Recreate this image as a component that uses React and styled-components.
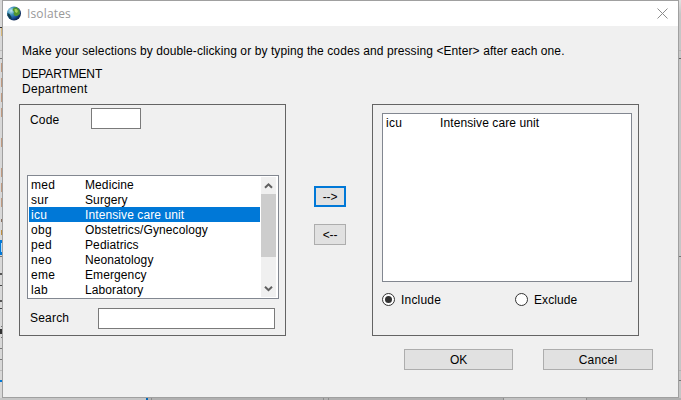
import React from 'react';
import styled, { createGlobalStyle } from 'styled-components';

const GlobalStyle = createGlobalStyle`
  * { box-sizing: border-box; }
  body { margin: 0; overflow: hidden; font: 12px/15px "Liberation Sans", Arial, sans-serif; color: #000; }
`;

const mark = (color, y, height, x = 0, width = 2) =>
  `linear-gradient(${color}, ${color}) ${x}px ${y}px / ${width}px ${height}px no-repeat`;

const leftMarks = [
  mark('#b5d9f5', 243, 9, 1, 1),
  mark('#0078d7', 240, 15),
  mark('#0078d7', 380, 2),
  mark('#333', 27, 1),
  mark('#d8b878', 28, 8, 1, 1),
  mark('#bbb', 50, 1),
  mark('#777', 58, 1),
  ...[63, 78, 93, 108, 138, 168, 183, 198].map(y => mark('#c09a80', y, 9, 1, 1)),
  mark('#8a7060', 219, 3, 1, 1),
  mark('#c09040', 230, 5, 1, 1),
  mark('#777', 256, 1),
  mark('#555', 273, 2),
  mark('#444', 285, 1),
  mark('#555', 300, 2),
  mark('#444', 308, 1),
  mark('#777', 326, 1, 1, 1),
  mark('#333', 329, 5),
  mark('#777', 337, 1, 1, 1),
  mark('#777', 348, 1),
  mark('#777', 359, 1),
  mark('#bbb', 370, 1),
].join(', ');

const rightMarks = [
  mark('#b4b4b4', 50, 1),
  mark('#666', 58, 1),
  mark('#777', 256, 1),
  mark('#b0b0b0', 370, 1),
  mark('#777', 380, 1),
].join(', ');

const Desktop = styled.div`
  display: grid;
  grid-template-columns: 2px 677px 2px;
  grid-template-rows: 398px 2px;
  width: 681px;
  height: 400px;
`;

const LeftSliver = styled.div`
  background: ${leftMarks}, #d8d8d8;
`;

const RightSliver = styled.div`
  background: ${rightMarks}, linear-gradient(#e2e2e2, #c6c6c6 14px, #c6c6c6);
`;

const BottomSliver = styled.div`
  grid-column: 1 / -1;
  background:
    ${mark('#0067b8', 0, 2, 146)},
    ${mark('#8c8c8c', 0, 2, 151, 1)},
    ${mark('#8c8c8c', 0, 2, 323, 1)},
    ${mark('#8c8c8c', 0, 2, 328, 1)},
    ${mark('#8c8c8c', 0, 2, 503, 1)},
    ${mark('#8c8c8c', 0, 2, 586, 1)},
    ${mark('#c2c2c2', 0, 2, 504, 82)},
    ${mark('#c6c6c6', 0, 2, 0, 146)},
    #b0b0b0;
`;

const Dialog = styled.div`
  display: flex;
  flex-direction: column;
  border: 1px solid #a0a0a0;
  background: #f0f0f0;
`;

const TitleBar = styled.div`
  display: flex;
  align-items: center;
  height: 25px;
  padding: 0 10px 1px 4px;
  background: #fff;
`;

const Title = styled.span`
  flex: 1;
  margin: 1px 0 0 6px;
  color: #999;
  font: 12px/16px "Open Sans", "Noto Sans", sans-serif;
  letter-spacing: 0.15px;
`;

const Text = styled.span`
  white-space: pre;
  letter-spacing: ${p => p.$spacing ?? 0.1}px;
`;

const Intro = styled.div`
  display: flex;
  flex-direction: column;
  height: 78px;
  padding: 18px 0 0 19px;
`;

const Department = styled.div`
  display: flex;
  flex-direction: column;
  margin-top: 8px;
`;

const Main = styled.div`
  display: flex;
  padding-left: 16px;
`;

const Panel = styled.div`
  width: 267px;
  height: 232px;
  border: 1px solid #646464;
  padding: ${p => p.$padding};
`;

const Field = styled.label`
  display: flex;
  height: 21px;
  padding-left: 3px;
`;

const FieldName = styled.span`
  width: ${p => p.$width}px;
  line-height: ${p => p.$line}px;
  letter-spacing: 0.2px;
`;

const Input = styled.input`
  width: ${p => p.$width}px;
  height: 21px;
  border: 1px solid #7a7a7a;
  background: #fff;
  padding: 0 3px;
  outline: none;
`;

const ListBox = styled.div`
  display: flex;
  width: ${p => p.$width}px;
  height: ${p => p.$height}px;
  margin: ${p => p.$margin || 0};
  padding: 1px;
  border: 1px solid #828790;
  background: #fff;
`;

const Rows = styled.div`
  flex: 1;
`;

const Row = styled.div`
  display: grid;
  grid-template-columns: 54px 1fr;
  height: 15px;
  padding-left: 2px;
  line-height: 17px;
  color: ${p => (p.$selected ? '#fff' : '#000')};
  background: ${p => (p.$selected ? '#0078d7' : 'transparent')};
`;

const ScrollBar = styled.div`
  display: flex;
  flex-direction: column;
  width: 15px;
  margin: 0 1px;
  background: #f0f0f0;
`;

const ScrollThumb = styled.div`
  height: 63px;
  margin-bottom: auto;
  background: #cdcdcd;
`;

const Transfer = styled.div`
  display: flex;
  flex-direction: column;
  align-items: center;
  gap: 17px;
  width: 86px;
  padding: 82px 0 0 2px;
`;

const Button = styled.button`
  width: ${p => p.$width}px;
  height: 21px;
  padding: ${p => (p.$focused ? 1 : 2)}px 0 0;
  border: ${p => (p.$focused ? '2px solid #0078d7' : '1px solid #adadad')};
  background: #e1e1e1;
  color: #000;
  font: inherit;
  line-height: ${p => (p.$focused ? 16 : 17)}px;
  letter-spacing: ${p => p.$spacing ?? 0.1}px;
`;

const Choices = styled.div`
  display: grid;
  grid-template-columns: 133px 1fr;
  margin-top: 10px;
`;

const Choice = styled.label`
  display: flex;
  align-items: center;
  gap: 6px;
  height: 15px;
  line-height: 15px;
`;

const ChoiceText = styled(Text)`
  padding-top: 2px;
`;

const Actions = styled.div`
  display: flex;
  justify-content: flex-end;
  gap: 30px;
  padding: 13px 25px 0 0;
`;

const GlobeIcon = () => (
  <svg width="14" height="15" viewBox="0 0 14 15">
    <defs>
      <radialGradient id="sea" cx=".3" cy=".3" r=".8">
        <stop offset="0" stopColor="#c4ecf4" />
        <stop offset=".35" stopColor="#3f93bc" />
        <stop offset=".7" stopColor="#164a94" />
        <stop offset="1" stopColor="#071838" />
      </radialGradient>
    </defs>
    <circle cx="7" cy="7.5" r="7" fill="url(#sea)" />
    <path d="M6.500 2l3-1 3 3 .5 4-3 2-2 0-1.500-2 .500-2-1.500-2z" fill="#4f9430" />
    <path d="M.5 7l2 1 2 3 0 2.500-2-1-2-3z" fill="#123f4c" />
    <path d="M7.500 3l2 0 1.500 2-1 2-2-1z" fill="#a4d058" />
  </svg>
);

const CloseIcon = () => (
  <svg width="11" height="11" viewBox="0 0 11 11">
    <path d="M.5.5l10 10M10.500.5l-10 10" stroke="#8c8c8c" fill="none" />
  </svg>
);

const Chevron = ({ down }) => (
  <svg width="15" height="17" viewBox="0 0 15 17">
    <path
      d={down ? 'M4 6.700l3.500 3.500 3.500-3.500' : 'M4 10.800l3.500-3.500 3.500 3.500'}
      stroke="#606060"
      strokeWidth="2"
      fill="none"
    />
  </svg>
);

const RadioMark = ({ checked }) => (
  <svg width="13" height="13" viewBox="0 0 13 13">
    <circle cx="6.5" cy="6.5" r="6" fill="#fff" stroke="#333" />
    {checked && <circle cx="6.5" cy="6.5" r="3.5" fill="#333" />}
  </svg>
);

const departments = [
  ['med', 'Medicine'],
  ['sur', 'Surgery'],
  ['icu', 'Intensive care unit'],
  ['obg', 'Obstetrics/Gynecology'],
  ['ped', 'Pediatrics'],
  ['neo', 'Neonatology'],
  ['eme', 'Emergency'],
  ['lab', 'Laboratory'],
];

export default function App() {
  return (
    <>
      <GlobalStyle />
      <Desktop>
        <LeftSliver />
        <Dialog>
          <TitleBar>
            <GlobeIcon />
            <Title>Isolates</Title>
            <CloseIcon />
          </TitleBar>
          <Intro>
            <Text $spacing={0.09}>
              Make your selections by double-clicking or by typing the codes and pressing &lt;Enter&gt; after each one.
            </Text>
            <Department>
              <Text $spacing={-0.15}>DEPARTMENT</Text>
              <Text $spacing={0.28}>Department</Text>
            </Department>
          </Intro>
          <Main>
            <Panel $padding="3px 7px">
              <Field>
                <FieldName $width={61} $line={24}>Code</FieldName>
                <Input $width={50} aria-label="Code" />
              </Field>
              <ListBox $width={252} $height={124} $margin="46px 0 9px">
                <Rows>
                  {departments.map(([code, name]) => (
                    <Row key={code} $selected={code === 'icu'}>
                      <Text $spacing={0.3}>{code}</Text>
                      <Text>{name}</Text>
                    </Row>
                  ))}
                </Rows>
                <ScrollBar>
                  <Chevron />
                  <ScrollThumb />
                  <Chevron down />
                </ScrollBar>
              </ListBox>
              <Field>
                <FieldName $width={68} $line={20}>Search</FieldName>
                <Input $width={177} aria-label="Search" />
              </Field>
            </Panel>
            <Transfer>
              <Button $width={32} $focused $spacing={-0.2}>--&gt;</Button>
              <Button $width={32} $spacing={-0.2}>&lt;--</Button>
            </Transfer>
            <Panel $padding="8px 0 0 9px">
              <ListBox $width={250} $height={169}>
                <Rows>
                  <Row>
                    <Text $spacing={0.3}>icu</Text>
                    <Text>Intensive care unit</Text>
                  </Row>
                </Rows>
              </ListBox>
              <Choices>
                <Choice><RadioMark checked /><ChoiceText $spacing={0.2}>Include</ChoiceText></Choice>
                <Choice><RadioMark /><ChoiceText>Exclude</ChoiceText></Choice>
              </Choices>
            </Panel>
          </Main>
          <Actions>
            <Button $width={109} $spacing={-0.2}>OK</Button>
            <Button $width={110} $spacing={0.2}>Cancel</Button>
          </Actions>
        </Dialog>
        <RightSliver />
        <BottomSliver />
      </Desktop>
    </>
  );
}
